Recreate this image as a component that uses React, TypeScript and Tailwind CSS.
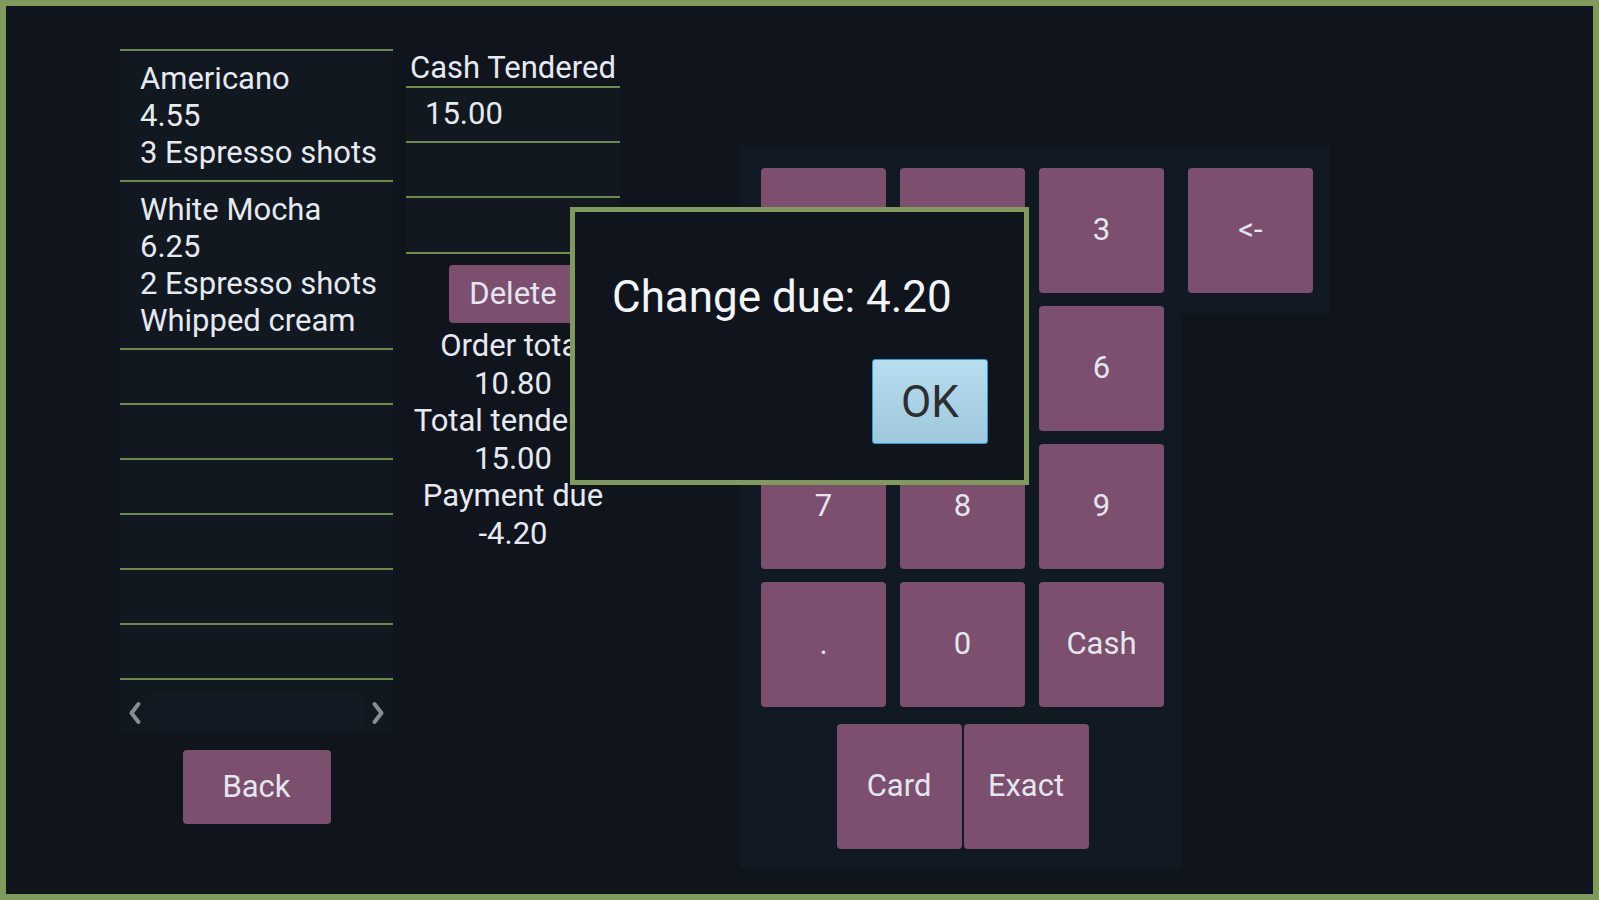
import React from "react";

const F = { fontFamily: "Roboto, 'Noto Sans', sans-serif" };

function Key({ label, className = "" }: { label: string; className?: string }) {
  return (
    <div
      className={
        "w-[125px] h-[125px] rounded-[4px] bg-[#7b4f6d] flex items-center justify-center text-[31px] text-[#e4e6ef] " +
        className
      }
    >
      {label}
    </div>
  );
}

export default function App() {
  const items = [
    ["Americano", "4.55", "3 Espresso shots"],
    ["White Mocha", "6.25", "2 Espresso shots", "Whipped cream"],
  ];
  return (
    <div
      style={F}
      className="relative w-[1599px] h-[900px] border-[6px] border-[#7f9a5a] bg-[#10151d] text-[#e6e9f0] overflow-hidden"
    >
      <div className="flex items-start pl-[114px] pt-[43px]">
        {/* Left column */}
        <div className="w-[273px] flex flex-col">
          <div className="border-t-2 border-[#6b8a4c] bg-[#111820]">
            {items.map((it, i) => (
              <div
                key={i}
                className="border-b-2 border-[#6b8a4c] pl-[20px] py-[9px] text-[31px] leading-[37px]"
              >
                {it.map((t, j) => (
                  <div key={j}>{t}</div>
                ))}
              </div>
            ))}
            {[0, 1, 2, 3, 4, 5].map((i) => (
              <div key={i} className="h-[55px] border-b-2 border-[#6b8a4c]" />
            ))}
          </div>
          <div className="h-[53px] bg-[#111920] flex items-end">
            <div className="h-[40px] w-full flex items-center">
              <div className="w-[30px] flex justify-center">
                <svg width="14" height="24" viewBox="0 0 14 24">
                  <path d="M10.5 3 L3.5 12 L10.5 21" stroke="#8a8d92" strokeWidth="4" fill="none" strokeLinecap="round" strokeLinejoin="round" />
                </svg>
              </div>
              <div className="flex-1 h-full bg-[#131a23]" />
              <div className="w-[30px] flex justify-center">
                <svg width="14" height="24" viewBox="0 0 14 24">
                  <path d="M3.5 3 L10.5 12 L3.5 21" stroke="#8a8d92" strokeWidth="4" fill="none" strokeLinecap="round" strokeLinejoin="round" />
                </svg>
              </div>
            </div>
          </div>
          <div className="flex justify-center mt-[17px]">
            <div className="w-[148px] h-[74px] rounded-[4px] bg-[#7b4f6d] flex items-center justify-center text-[31px] text-[#e4e6ef]">
              Back
            </div>
          </div>
        </div>

        {/* Middle column */}
        <div className="ml-[13px] w-[214px] flex flex-col">
          <div className="h-[37px] flex items-end justify-center text-[31px] leading-[37px] whitespace-nowrap">
            Cash Tendered
          </div>
          <div className="border-t-2 border-[#6b8a4c]">
            <div className="h-[55px] border-b-2 border-[#6b8a4c] bg-[#111820] flex items-center pl-[19px] text-[31px]">
              15.00
            </div>
            <div className="h-[55px] border-b-2 border-[#6b8a4c] bg-[#111820]" />
            <div className="h-[56px] border-b-2 border-[#6b8a4c] bg-[#111820]" />
          </div>
          <div className="flex justify-center mt-[11px]">
            <div className="w-[129px] h-[58px] rounded-[4px] bg-[#7b4f6d] flex items-center justify-center text-[31px] text-[#e4e6ef]">
              Delete
            </div>
          </div>
          <div className="mt-[4px] text-center text-[31px] leading-[37.5px] whitespace-nowrap">
            <div>Order total</div>
            <div>10.80</div>
            <div>Total tendered</div>
            <div>15.00</div>
            <div>Payment due</div>
            <div>-4.20</div>
          </div>
        </div>

        {/* Numpad */}
        <div className="ml-[120px] mt-[97px] w-[441px] h-[723px] bg-[#111a22] pt-[22px] pl-[21px]">
          <div className="grid grid-cols-[125px_125px_125px] gap-x-[14px] gap-y-[13px]">
            <Key label="" />
            <Key label="" />
            <Key label="3" />
            <Key label="" />
            <Key label="" />
            <Key label="6" />
            <Key label="7" />
            <Key label="8" />
            <Key label="9" />
            <Key label="." />
            <Key label="0" />
            <Key label="Cash" />
          </div>
          <div className="flex justify-center gap-[2px] mt-[17px] w-[403px]">
            <Key label="Card" />
            <Key label="Exact" />
          </div>
        </div>
        <div className="mt-[97px] ml-[1px] w-[148px] h-[168px] bg-[#111a22] pt-[22px] pl-[6px]">
          <Key label="<-" />
        </div>
      </div>

      {/* Dialog */}
      <div className="absolute left-[564px] top-[201px] w-[459px] h-[278px] border-[5px] border-[#7f9a5a] bg-[#10151d] flex flex-col">
        <div className="pl-[37px] pt-[59px] text-[44px] leading-[52px] text-[#f2f4f8] whitespace-nowrap">
          Change due: 4.20
        </div>
        <div className="flex justify-end pr-[36px] mt-[36px]">
          <div className="w-[116px] h-[85px] rounded-[3px] border border-[#2a9fd6] bg-gradient-to-b from-[#b7deef] to-[#9fc8dc] flex items-center justify-center text-[44px] text-[#2e2e2e]">
            OK
          </div>
        </div>
      </div>
    </div>
  );
}
